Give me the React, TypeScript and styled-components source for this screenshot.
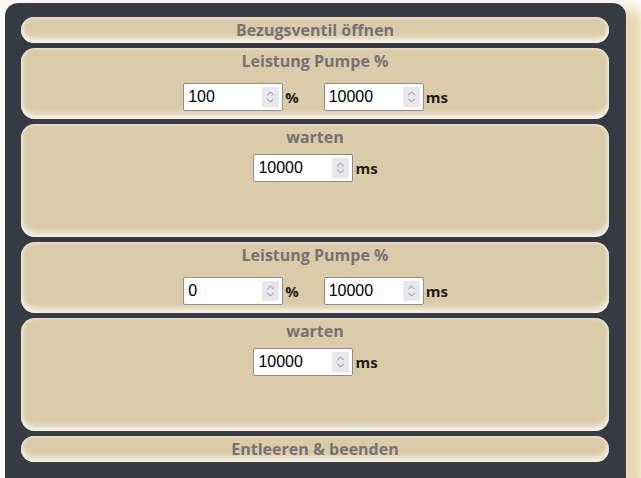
import { createGlobalStyle } from 'styled-components';
import styled from 'styled-components';

const GlobalStyle = createGlobalStyle`
  html, body {
    margin: 0;
    padding: 0;
    overflow: hidden;
    background: #fcf9f3;
  }
  * {
    box-sizing: border-box;
  }
`;

type Step =
  | { kind: 'label'; title: string }
  | { kind: 'pump'; title: string; power: number; duration: number }
  | { kind: 'wait'; title: string; duration: number };

const steps: Step[] = [
  { kind: 'label', title: 'Bezugsventil öffnen' },
  { kind: 'pump', title: 'Leistung Pumpe %', power: 100, duration: 10000 },
  { kind: 'wait', title: 'warten', duration: 10000 },
  { kind: 'pump', title: 'Leistung Pumpe %', power: 0, duration: 10000 },
  { kind: 'wait', title: 'warten', duration: 10000 },
  { kind: 'label', title: 'Entleeren & beenden' },
];

const SpinIcon = () => (
  <svg width="9" height="14" viewBox="0 0 9 14" fill="none" stroke="#8a8a90" strokeWidth="1" strokeLinecap="round" strokeLinejoin="round">
    <path d="M1.5 5 L4.5 2 L7.5 5" />
    <path d="M1.5 9 L4.5 12 L7.5 9" />
  </svg>
);

const NumberField = ({ value, unit }: { value: number; unit: string }) => (
  <Field>
    <InputBox>
      <Input type="number" defaultValue={value} />
      <Spinner>
        <SpinIcon />
      </Spinner>
    </InputBox>
    <Unit>{unit}</Unit>
  </Field>
);

export default function App() {
  return (
    <>
      <GlobalStyle />
      <Panel>
        {steps.map((step, i) => {
          if (step.kind === 'label') {
            return (
              <Card key={i} size="slim">
                <Title>{step.title}</Title>
              </Card>
            );
          }
          if (step.kind === 'pump') {
            return (
              <Card key={i} size="mid">
                <Title>{step.title}</Title>
                <Row offset={11}>
                  <NumberField value={step.power} unit="%" />
                  <NumberField value={step.duration} unit="ms" />
                </Row>
              </Card>
            );
          }
          return (
            <Card key={i} size="tall">
              <Title>{step.title}</Title>
              <Row offset={6}>
                <NumberField value={step.duration} unit="ms" />
              </Row>
            </Card>
          );
        })}
      </Panel>
    </>
  );
}

const Panel = styled.div`
  margin: 3px 0 0 5px;
  width: 621px;
  padding: 14px 17px 16px 16px;
  background: #363a43;
  border-radius: 13px 13px 0 0;
  box-shadow: 16px 6px 12px #ead6ad;
  display: flex;
  flex-direction: column;
  gap: 5px;
`;

const heights = { slim: 26, mid: 71, tall: 113 };

const Card = styled.div<{ size: 'slim' | 'mid' | 'tall' }>`
  height: ${(p) => heights[p.size]}px;
  padding-top: 2px;
  background: #dccba9;
  border-radius: ${(p) => (p.size === 'slim' ? '13px' : '14px')};
  box-shadow:
    inset 0 -5px 6px -1px rgba(255, 255, 255, 0.85),
    inset 0 2px 3px -1px rgba(255, 255, 255, 0.45),
    inset 3px 0 4px -2px rgba(255, 255, 255, 0.4),
    inset -3px 0 4px -2px rgba(255, 255, 255, 0.4);
  display: flex;
  flex-direction: column;
  align-items: center;
`;

const Title = styled.div`
  font-family: 'Open Sans', 'Noto Sans', sans-serif;
  font-weight: 700;
  font-size: 16px;
  line-height: 22px;
  color: #737373;
`;

const Row = styled.div<{ offset: number }>`
  margin-top: ${(p) => p.offset}px;
  display: flex;
  align-items: center;
  gap: 25px;
  padding-left: 1px;
`;

const Field = styled.div`
  display: flex;
  align-items: center;
  gap: 2px;
`;

const InputBox = styled.div`
  position: relative;
  width: 100px;
  height: 28px;
`;

const Input = styled.input`
  width: 100%;
  height: 100%;
  margin: 0;
  padding: 0 22px 0 4px;
  border: 1px solid #8d8d8d;
  border-radius: 2px;
  background: #fff;
  font-family: 'Liberation Sans', Arial, sans-serif;
  font-size: 16px;
  color: #000;
  outline: none;
  -moz-appearance: textfield;

  &::-webkit-outer-spin-button,
  &::-webkit-inner-spin-button {
    -webkit-appearance: none;
    margin: 0;
  }
`;

const Spinner = styled.span`
  position: absolute;
  top: 4px;
  right: 4px;
  width: 17px;
  height: 20px;
  background: #e7e7ec;
  display: flex;
  align-items: center;
  justify-content: center;
  pointer-events: none;
`;

const Unit = styled.span`
  font-family: 'Open Sans', 'Noto Sans', sans-serif;
  font-weight: 700;
  font-size: 15px;
  color: #1e1e1e;
`;
